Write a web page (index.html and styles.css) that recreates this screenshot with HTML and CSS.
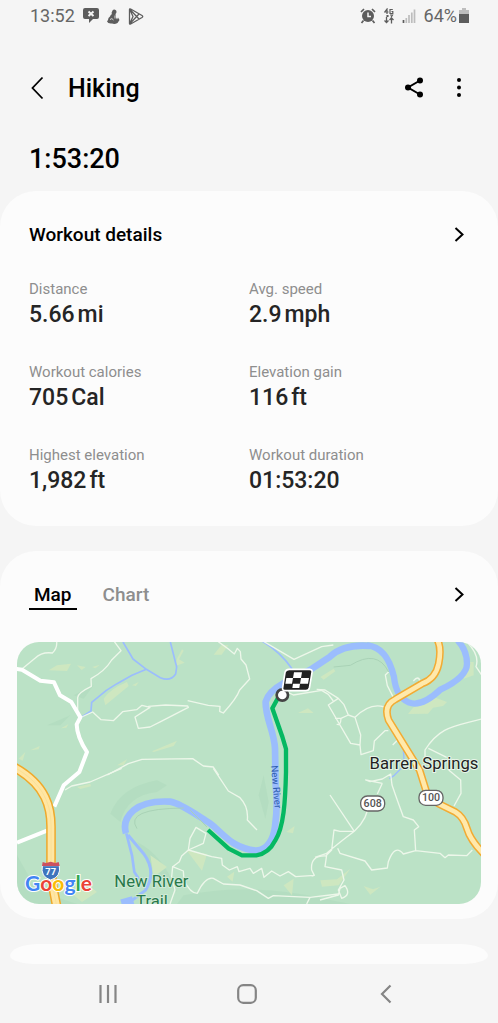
FILE: index.html
```html
<!DOCTYPE html>
<html lang="en">
<head>
<meta charset="utf-8">
<meta name="viewport" content="width=device-width, initial-scale=1">
<title>Hiking</title>
<link rel="stylesheet" href="styles.css">
</head>
<body>
<div class="screen">
  <div class="status">
    <div class="status-group">
      <span class="status-text">13:52</span>
      <svg width="16" height="16" viewBox="0 0 16 16"><path d="M2 0h12q2 0 2 2v7q0 2-2 2h-4l-4 4v-4H2q-2 0-2-2V2q0-2 2-2z" fill="#5d5d5d"/><path d="M5.500 3.500l5 4.500M10.500 3.500l-5 4.500" stroke="#f5f5f5" stroke-width="2"/></svg>
      <svg width="13" height="16" viewBox="0 0 13 16"><path d="M5.500 2.500a2.200 2.200 0 0 1 4 1.500q0 1-1 2l.5 3.500 1 2 1-2 1.500 2.500-2 3q-3 1.500-5.500.5-4 .5-5-2l1-1.500q0-2.500 2-3.500 .5-2 2-2.500L4.500 5z" fill="#5d5d5d"/><path d="M3 11.500q2-2 3.500.5M8 7.500v3" stroke="#f5f5f5" stroke-width=".8" fill="none"/></svg>
      <svg width="16" height="17" viewBox="0 0 16 17"><path d="M1.500 1.500v14q0 1 1.200.5L14 9.500q1.500-1 0-2L2.700 1Q1.500.5 1.500 1.500zM2 1.500l9 9.500M2 15.500L11 6M2 2l3 6.500L2 15" fill="none" stroke="#5d5d5d" stroke-width="1.300"/></svg>
    </div>
    <div class="status-group">
      <svg width="16" height="16" viewBox="0 0 16 16"><circle cx="8" cy="8" r="6" fill="#5d5d5d"/><path d="M1 4l3-3M15 4l-3-3M3.500 12.500L1.500 15M12.500 12.500l2 2.500" stroke="#5d5d5d" stroke-width="1.700"/><path d="M8 4.500v4h3" fill="none" stroke="#f5f5f5" stroke-width="1.500"/></svg>
      <svg width="10" height="16" viewBox="0 0 10 16" fill="none" stroke="#5d5d5d"><path d="M3 6V1L.7 4H4.500M8.800 1.500H6v4h2.800V3.500H7.500M2 8h3M3.500 7v2M6 7h2.500L7 9.500" stroke-width="1.200"/><path d="M2.500 9v5.500M.5 12.500l2 2 2-2M7.500 15.500V10M5.500 12l2-2 2 2" stroke-width="1.300"/></svg>
      <svg width="14" height="16" viewBox="0 0 14 16"><path d="M1.500 15v-3" stroke="#5d5d5d" stroke-width="1.700"/><path d="M4.300 15v-5M7 15V7M9.800 15V4.500M12.500 15V1.500" stroke="#bdbdbd" stroke-width="1.700"/></svg>
      <span class="status-text charge">64%<svg width="10" height="16" viewBox="0 0 10 16"><path d="M3 0h4v2h3v5H0V2h3z" fill="#bdbdbd"/><path d="M0 6h10v9H0z" fill="#5d5d5d"/></svg></span>
    </div>
  </div>

  <header class="topbar">
    <button class="icon-btn" aria-label="Back"><svg width="14" height="24" viewBox="0 0 14 24"><path d="M12.500 1.500L2.500 12l10 10.500" fill="none" stroke="#000" stroke-width="1.800"/></svg></button>
    <h1 class="title">Hiking</h1>
    <span class="spacer"></span>
    <button class="icon-btn" aria-label="Share"><svg width="20" height="22" viewBox="0 0 20 22"><path d="M16 3.500L4 10.500l12 7" fill="none" stroke="#000" stroke-width="2"/><circle cx="16" cy="3.500" r="3"/><circle cx="4" cy="10.500" r="3"/><circle cx="16" cy="17.500" r="3"/></svg></button>
    <button class="icon-btn more" aria-label="More options"><svg width="6" height="20" viewBox="0 0 6 20"><circle cx="3" cy="2" r="2"/><circle cx="3" cy="9.500" r="2"/><circle cx="3" cy="17" r="2"/></svg></button>
  </header>
  <p class="total">1:53:20</p>

  <main class="cards">
    <section class="card details">
      <div class="card-head">
        <h2 class="card-title">Workout details</h2>
        <button class="icon-btn" aria-label="Open workout details"><svg width="12" height="18" viewBox="0 0 12 18"><path d="M2.500 2l7 6.500-7 6.500" fill="none" stroke="#000" stroke-width="2"/></svg></button>
      </div>
      <dl class="stats">
        <div><dt>Distance</dt><dd><span>5.66</span><span>mi</span></dd></div>
        <div><dt>Avg. speed</dt><dd><span>2.9</span><span>mph</span></dd></div>
        <div><dt>Workout calories</dt><dd><span>705</span><span>Cal</span></dd></div>
        <div><dt>Elevation gain</dt><dd><span>116</span><span>ft</span></dd></div>
        <div><dt>Highest elevation</dt><dd><span>1,982</span><span>ft</span></dd></div>
        <div><dt>Workout duration</dt><dd><span>01:53:20</span></dd></div>
      </dl>
    </section>

    <section class="card route">
      <div class="card-head">
        <div class="tabs" role="tablist">
          <button class="tab active" role="tab" aria-selected="true">Map</button>
          <button class="tab" role="tab" aria-selected="false">Chart</button>
        </div>
        <button class="icon-btn" aria-label="Open map"><svg width="12" height="18" viewBox="0 0 12 18"><path d="M2.500 2l7 6.500-7 6.500" fill="none" stroke="#000" stroke-width="2"/></svg></button>
      </div>
      <svg class="map" viewBox="0 0 1392 786" role="img" aria-label="Route map">
        <rect width="1392" height="786" fill="#bbe2c6"/>
        <!-- relief shading and clearings -->
        <g fill="#a9d8b8" opacity=".4">
          <path d="M310 540q20-80 110-90l30-20-30-15q-110 20-140 100zM0 690q60 60 180 96H0zM360 600q80 40 120 150l-60-50zM500 760q200-40 420 10l80 16H480zM0 640l40 70-40 10zM740 400l15 80-10 50-20-70z"/>
          <path d="M170 160l60-30-30 40zM90 250l70-30-30 30z"/>
        </g>
        <g fill="#cee7c0">
          <path d="M95 85l25-15 42-5-12 22zM180 70l26 5-12 9zM225 75l24-7-14 11zM260 170q20-30 70-50l5 12-70 58zM345 130l20-10-8 12zM132 259l22-12-6 10zM40 325l28-13-3 10zM5 350l20-20-8 26zM300 370l30-18-10 18zM405 328l75-32-10 16-60 18zM480 50l15-28 5 4-14 26 17 10-28 10zM843 213l30-14 17 14zM1190 195l60-30 40 15-12 12-30 5-15 18-60 1zM910 105l40-25 5 8-35 25zM1350 60l20 0 0 40-30 10zM180 435l40-10 2 8-32 8zM510 626l60 10-15 50zM630 704l22-15-5 30zM800 730l30-20-5 50zM808 570l25-18-5 22zM1040 732l28 10 22-8-30 24zM910 715l50-3 40-32-35 50-50 4zM400 640l50 35-40 30zM165 755l50-25 25 20-45 30zM590 38l24-30 20 2-20 28z"/>
        </g>
        <!-- rivers -->
        <g fill="none" stroke="#9bbdfd" stroke-linejoin="round">
          <path stroke-width="5" d="M192 226L222 207 224 181 268 145 300 125 345 100 388 82M318 0L348 51 388 82 430 107Q460 120 476 96L479 75 460 0M735-3Q790 30 825 80"/>
          <path stroke-width="8" d="M328 574L345 640 352 690 375 725"/>
          <path stroke-width="9" d="M333 579L380 635Q420 690 385 745L325 790"/>
          <path stroke-width="20" d="M327 574Q315 535 350 505T459 479C490 483 540 520 579 544C620 575 645 620 719 626Q765 620 774 554T776 430L774 319C772 270 744 225 746 179Q755 148 799 124L879 84 939 44Q980 5 1060 12"/>
          <path stroke-width="19" d="M1050 10Q1110 15 1131 105 1137 165 1175 181T1270 143Q1350 105 1350 65T1322-5"/>
          <path stroke-width="36" d="M315 790l35-10"/>
          <path stroke-width="4" d="M1159 320l3 50-30 30-15 10"/>
        </g>
        <!-- local roads -->
        <g fill="none" stroke="#edf7ea" stroke-width="4" stroke-linejoin="round">
          <g transform="translate(-51 -21)">
            <path d="M65 103L105 70Q125 50 157 54 172 40 170 20M343 20L363 47 335 75Q315 108 273 131L274 154Q230 175 233 190V225M245 246L278 231 303 254 340 257 368 230 410 224 426 211 450 217 405 246 415 280 450 276 482 260 565 217 563 213 497 210 445 214M322 420L385 386 426 373 578 371 610 393 640 396 656 420"/>
          </g>
          <g transform="translate(429 -21)">
            <path d="M83 197L145 211 180 214 179 229 190 234Q230 190 239 165L269 132 258 90 243 72 241 50 232 40 223 57 205 42 175 20M312 20L402 73 485 35 520 30M380 170L400 180 485 166 505 178 520 198"/>
          </g>
          <g transform="translate(909 -21)">
            <path d="M-10 163L15 165 55 190 25 210 92 325 120 330 123 359 160 347 163 318 195 287 205 287M55 190L72 209 85 240 63 250Q62 275 50 267M85 240L105 247 122 300 120 330M45 250L63 250M105 247Q150 202 193 216M220 187L202 152 196 120 206 110M300 138Q295 120 280 138M485 252C400 275 360 275 315 345V365M325 340L380 367M485 120L468 95Q480 60 440 20M218 330L243 305"/>
          </g>
          <g transform="translate(-51 384)"><path d="M195 60L215 48 270 36 330 10 365-5"/></g>
          <g transform="translate(429 384)">
            <path d="M160-5L205 63 240 83Q266 110 262 150L291 180M85 240L90 205 108 172 138 190 130 220 85 240 155 260 185 265 187 285 208 300 232 290 237 305 270 295 280 310 305 295 312 322 335 303 360 318 385 305 407 320 463 316 455 300Q450 255 500 258M85 240L65 258 58 275 38 290 70 303 72 330Q90 370 112 370 135 320 160 325L190 342 240 345 290 362 325 385 340 377 450 382 535 372M450 382L440 402M38 290L35 320 45 360 30 402M463 316L455 318"/>
          </g>
          <g transform="translate(909 384)">
            <path d="M-15 262L20 250Q55 220 103 184L60 184 42 180 35 240 20 255 15 290 65 300 72 330 55 360 65 385Q95 375 75 347L60 355 55 375 0 390M103 184L30 75M103 184Q145 145 145 100M187 40L172 72M187 40L137 30 150 35 187 27 212 12 216 45Q235 100 250 140L280 150 296 170 283 180 287 242M53 235L60 250 135 273 155 300 202 294 205 275Q225 220 250 252L287 242 360 250 375 263 385 255 440 257 457 240M386 0L422 30 423 70 402 108"/>
          </g>
        </g>
        <path fill="none" stroke="#a9d2b6" stroke-width="3" d="M360 560Q320 500 500 498M520 505l50 50M950 75l50-5Q1080 20 1115 90"/>
        <path fill="none" stroke="#fff" stroke-width="12" stroke-linejoin="round" d="M-5 80L15 83 70 116 111 121 129 160 163 180 190 226 179 247Q180 285 210 330L187 390 140 430 112 494M0 602L90 566"/>
        <!-- highways -->
        <g fill="none" stroke-linejoin="round">
          <path stroke="#efa92c" stroke-width="29" d="M-10 375C90 430 103 500 102 560V650Q100 710 120 796"/>
          <path stroke="#ffe6a3" stroke-width="20" d="M-10 375C90 430 103 500 102 560V650Q100 710 120 796"/>
          <path stroke="#f8dd91" stroke-width="2" d="M-10 375C90 430 103 500 102 560V650Q100 710 120 796"/>
          <path stroke="#f2ab33" stroke-width="23" d="M1262-5Q1274 20 1265 65T1215 125L1135 172Q1098 190 1115 235L1208 385 1230 455 1264 485 1315 510Q1340 525 1350 560T1400 635"/>
          <path stroke="#ffe9ab" stroke-width="14" d="M1262-5Q1274 20 1265 65T1215 125L1135 172Q1098 190 1115 235L1208 385 1230 455 1264 485 1315 510Q1340 525 1350 560T1400 635"/>
        </g>
        <!-- recorded track -->
        <path fill="none" stroke="#05b862" stroke-width="13" stroke-linejoin="round" d="M573 564L635 620 675 640H718Q755 635 775 595C800 555 805 480 807 390V321L795 281 766 199 790 155"/>
        <circle cx="796" cy="159" r="17" fill="#fff" stroke="#444" stroke-width="8"/>
        <path d="M816 82H878Q887 83 885 92L877 139Q875 146 867 146H803Q795 145 797 137L804 91Q806 83 816 82z" fill="#222" stroke="#fff" stroke-width="5"/>
        <path fill="#fff" d="M831 91h24l-3 17h-24zM808 108h20l-3 17h-20zM852 108h24l-3 17h-24zM828 125h21l-2 13h-21z"/>
        <!-- labels -->
        <text class="place" x="1221" y="382">Barren Springs</text>
        <text class="park" x="403" y="736">New River</text>
        <text class="park" x="405" y="794">Trail</text>
        <text class="water" transform="translate(762 371) rotate(85)">New River</text>
        <g fill="#fff" stroke="#666" stroke-width="4"><rect x="1031" y="462" width="72" height="45" rx="20"/><rect x="1206" y="445" width="72" height="45" rx="20"/></g>
        <text class="road" x="1067" y="495">608</text>
        <text class="road" x="1242" y="478">100</text>
        <path d="M76 671Q70 705 101 714 133 705 127 671z" fill="#3e74bd" stroke="#fff" stroke-width="3"/>
        <path d="M77 660l10 3 14-4 14 4 10-3 3 12H75z" fill="#cc5260"/>
        <text class="interstate" x="101" y="700">77</text>
        <text class="google" x="24" y="746"><tspan fill="#4285f4">G</tspan><tspan fill="#ea4335">o</tspan><tspan fill="#fbbc05">o</tspan><tspan fill="#4285f4">g</tspan><tspan fill="#34a853">l</tspan><tspan fill="#ea4335">e</tspan></text>
      </svg>
    </section>
    <section class="next-card"></section>
  </main>

  <nav class="navbar" aria-label="System">
    <button class="icon-btn" aria-label="Recent apps"><svg width="20" height="20" viewBox="0 0 20 20"><path d="M2.500 1v18M10 1v18M17.500 1v18" stroke="#858585" stroke-width="2.200"/></svg></button>
    <button class="icon-btn" aria-label="Home"><svg width="20" height="20" viewBox="0 0 20 20"><rect x="1.200" y="1.200" width="17.600" height="17.600" rx="5" fill="none" stroke="#858585" stroke-width="2.200"/></svg></button>
    <button class="icon-btn" aria-label="Back"><svg width="20" height="20" viewBox="0 0 20 20"><path d="M14.500 1.500L6 10l8.500 8.500" fill="none" stroke="#858585" stroke-width="2.200"/></svg></button>
  </nav>
</div>
</body>
</html>
```
FILE: styles.css
```css
* { box-sizing: border-box; }
body {
  margin: 0;
  background: #f5f5f5;
  color: #000;
  font-family: Roboto, "Liberation Sans", sans-serif;
}
h1, h2, p, dl, dd { margin: 0; }
svg { display: block; flex: none; }
.screen { min-height: 100vh; display: flex; flex-direction: column; }
.spacer { flex: 1; }
.icon-btn {
  display: flex;
  padding: 0;
  border: 0;
  background: none;
}

.status {
  display: flex;
  justify-content: space-between;
  height: 32px;
  padding: 0 29px 0 30px;
  color: #666;
}
.status-group { display: flex; align-items: center; gap: 8px; }
.status-text { font-size: 18px; line-height: 32px; }
.charge { display: flex; align-items: center; gap: 2px; }

.topbar {
  display: flex;
  align-items: center;
  height: 112px;
  padding: 0 36px 0 30px;
}
.title { margin-left: 24px; padding-top: 2px; font-size: 25px; font-weight: 500; line-height: 32px; }
.more { margin-left: 32px; }
.total {
  height: 47px;
  padding: 0 29px;
  font-size: 27px;
  font-weight: 500;
  line-height: 30px;
}

.cards { display: flex; flex-direction: column; gap: 25px; }
.card { background: #fcfcfc; border-radius: 36px; }
.details { padding: 28px 29px 29px; }
.route { padding: 28px 17px 15px; }
.card-head {
  display: flex;
  justify-content: space-between;
  align-items: center;
  height: 32px;
  padding-right: 4px;
}
.card-title { font-size: 19px; font-weight: 500; line-height: 32px; }
.stats {
  display: grid;
  grid-template-columns: 1fr 1fr;
  gap: 31px 0;
  padding-top: 28px;
}
.stats dt { color: #8e8e8e; font-size: 15px; line-height: 20px; }
.stats dd {
  display: flex;
  gap: 3px;
  color: #252525;
  font-size: 23px;
  font-weight: 500;
  line-height: 32px;
}

.route .card-head { padding: 0 16px 0 12px; }
.tabs { display: flex; gap: 21px; }
.tab {
  padding: 0 5px;
  border: 0;
  border-bottom: 2px solid transparent;
  background: none;
  color: #8e8e8e;
  font: 500 19px/27px Roboto, "Liberation Sans", sans-serif;
}
.tab.active { border-color: #000; color: #000; }
.map { width: 100%; height: auto; margin-top: 31px; border-radius: 22px; }
.map text { font-family: Roboto, "Liberation Sans", sans-serif; }
.map .place, .map .park {
  font-size: 50px;
  text-anchor: middle;
  fill: #222;
  stroke: #e8f5e9;
  stroke-width: 6px;
  paint-order: stroke;
}
.map .park { fill: #28784a; stroke: #cfead6; }
.map .water { font-size: 29px; fill: #2c5cae; }
.map .road { font-size: 32px; font-weight: 500; text-anchor: middle; fill: #555; }
.map .interstate { font-size: 28px; font-weight: 700; text-anchor: middle; fill: #fff; }
.map .google {
  font-family: Lato, sans-serif;
  font-size: 63px;
  font-weight: 700;
  stroke: #fff;
  stroke-width: 6px;
  paint-order: stroke;
}

.next-card {
  height: 20px;
  margin: 0 10px;
  background: #fcfcfc;
  border-radius: 28px / 12px 12px 8px 8px;
}
.navbar {
  display: flex;
  justify-content: space-between;
  align-items: center;
  flex: 1;
  min-height: 56px;
  padding: 0 102px 0 98px;
}
```
